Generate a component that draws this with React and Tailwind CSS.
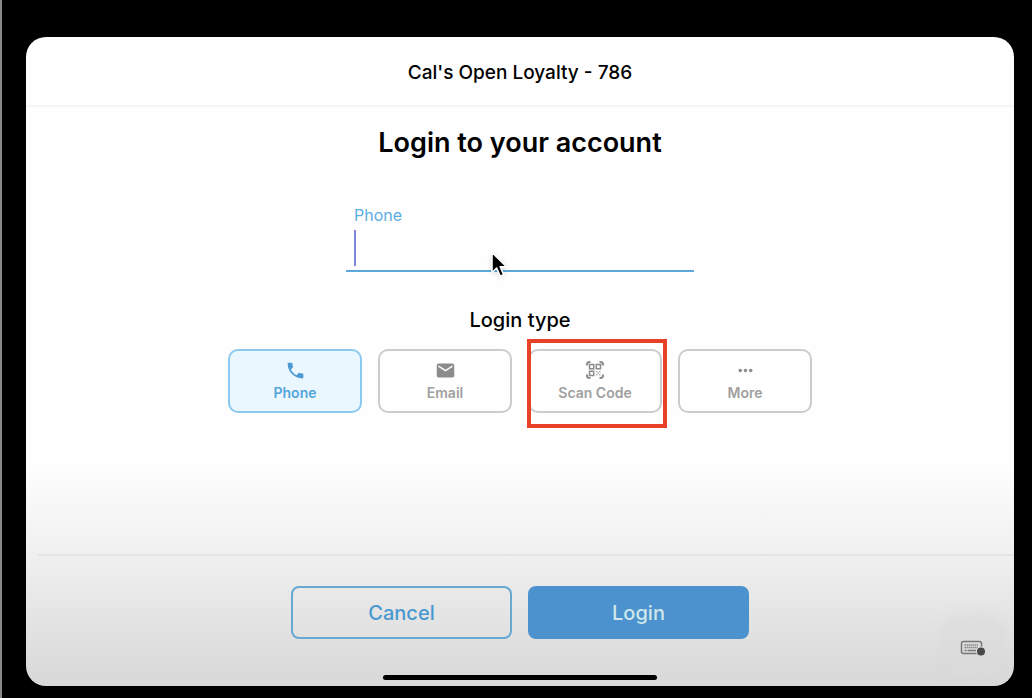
import React, { useState } from 'react';
import { MdPhone, MdEmail, MdMoreHoriz } from 'react-icons/md';
import clsx from 'clsx';

const ScanIcon = () => (
  <svg width="20" height="20" viewBox="0 0 20 20" fill="none" stroke="currentColor" strokeWidth={2} aria-hidden="true">
    {/* corners */}
    <path d="M2 5.5V4.5A2.5 2.5 0 0 1 4.5 2H5.5M14.5 2h1A2.5 2.5 0 0 1 18 4.5V5.5M18 14.5v1a2.5 2.5 0 0 1-2.5 2.5H14.5M5.5 18H4.5A2.5 2.5 0 0 1 2 15.5V14.5" />
    {/* code */}
    <path strokeWidth={1.5} d="M4.5 4.5h4.2v4.2H4.5zM11.3 4.5h4.2v4.2h-4.2zM4.5 11.3h4.2v4.2H4.5z" />
    <path
      fill="currentColor"
      stroke="none"
      opacity={0.6}
      d="M11 11h1.5v1.5H11zM14 11h1.5v1.5H14zM12.5 12.5H14V14h-1.5zM11 14h1.5v1.5H11zM14 14h1.5v1.5H14z"
    />
  </svg>
);

const KeyboardIcon = () => (
  <svg width="26" height="17" viewBox="0 0 26 17" fill="none" aria-hidden="true">
    <rect x="1.5" y="1.5" width="20" height="12" rx="2" stroke="#777" strokeWidth={1.5} />
    <path stroke="#888" strokeWidth={1.5} strokeDasharray="1.5 0.5" d="M4.5 5h14M4.5 7.5h14" />
    <path stroke="#777" strokeWidth={1.5} d="M4.5 10.5h2M7.5 10.5H16" />
    <circle cx="21" cy="11.5" r="5" fill="#dcdcdc" />
    <circle cx="21" cy="11.5" r="4" fill="#484848" />
  </svg>
);

const Pointer = () => (
  <svg
    className="absolute top-[22px] left-[144px] pointer-events-none drop-shadow-sm"
    width="20"
    height="28"
    viewBox="0 0 20 28"
    aria-hidden="true"
  >
    <path
      d="M2 1.5v20l4.7-4.4 3.4 8 3.5-1.5-3.4-7.8h6.3z"
      fill="#000"
      stroke="#fff"
      strokeWidth={1.5}
      strokeLinejoin="round"
    />
  </svg>
);

const loginTypes = [
  { id: 'phone', label: 'Phone', icon: <MdPhone size={21} /> },
  { id: 'email', label: 'Email', icon: <MdEmail size={21} /> },
  { id: 'scan', label: 'Scan Code', icon: <ScanIcon />, highlighted: true },
  { id: 'more', label: 'More', icon: <MdMoreHoriz size={21} /> },
];

const App = () => {
  const [type, setType] = useState('phone');
  const [phone, setPhone] = useState('');

  return (
    <div className="flex flex-col min-h-screen bg-black border-l-2 border-[#8a8a8a] pt-[37px] pr-[18px] pb-3 pl-6 font-['Inter',sans-serif] text-black">
      <main className="relative flex flex-col flex-1 rounded-[20px] overflow-hidden bg-[linear-gradient(to_bottom,#fefefe_66%,#efefef_80%,#d8d8d8_100%)]">
        <header className="flex items-center justify-center h-[70px] pt-1 border-b-2 border-[#f5f5f5]">
          <p className="text-[19px] leading-6 font-medium">Cal's Open Loyalty - 786</p>
        </header>

        <section className="flex flex-col items-center flex-1 px-6 pt-[18px]">
          <h1 className="text-[27px] leading-9 font-semibold">Login to your account</h1>

          {/* Phone field */}
          <div className="w-[348px] max-w-full mt-11 border-b-2 border-[#5ba9da]">
            <label htmlFor="phone" className="block px-2 text-base leading-5 text-[#5badde]">
              Phone
            </label>
            <div className="relative mt-1">
              <input
                id="phone"
                type="tel"
                value={phone}
                onChange={(e) => setPhone(e.target.value)}
                className="block w-full h-[41px] px-3 text-xl bg-transparent outline-none"
              />
              {phone === '' && <span className="absolute top-[1px] left-2 w-0.5 h-9 bg-[#8286d8]" />}
              <Pointer />
            </div>
          </div>

          <h2 className="mt-9 text-xl leading-6 font-medium">Login type</h2>

          {/* Login type buttons */}
          <div className="flex justify-center gap-4 mt-[17px]">
            {loginTypes.map((item) => (
              <div key={item.id} className="relative">
                <button
                  type="button"
                  onClick={() => setType(item.id)}
                  className={clsx(
                    'flex flex-col items-center justify-center w-[134px] h-16 pt-0.5 rounded-[10px] border-2 text-sm font-semibold cursor-pointer',
                    type === item.id
                      ? 'border-[#8bcaee] bg-[#eaf7fe] text-[#52a5dc]'
                      : 'border-[#cccccc] text-[#a0a0a0]'
                  )}
                >
                  <span className={clsx('flex items-center h-[22px]', type === item.id ? 'text-[#4c9ad4]' : 'text-[#8c8c8c]')}>
                    {item.icon}
                  </span>
                  <span className="leading-6">{item.label}</span>
                </button>
                {item.highlighted && (
                  <span className="absolute -top-2.5 -right-[5px] -bottom-[15px] -left-px border-4 border-[#e94128] pointer-events-none" />
                )}
              </div>
            ))}
          </div>
        </section>

        <footer className="flex flex-col items-center ml-3 pr-3 pb-1.5 border-t-2 border-[#e4e4e4]">
          <div className="flex justify-center gap-4 mt-[30px] text-xl font-medium">
            <button type="button" className="w-[221px] h-[53px] rounded-lg border-2 border-[#66a9d2] text-[#4a98d0] cursor-pointer">
              Cancel
            </button>
            <button type="button" className="w-[221px] h-[53px] rounded-lg bg-[#4b92ce] text-[#cfe7ea] cursor-pointer">
              Login
            </button>
          </div>
          <div className="w-[274px] h-[5px] mt-9 rounded-full bg-black" />
        </footer>

        <button
          type="button"
          aria-label="Keyboard"
          className="absolute right-3 bottom-2 flex items-center justify-center w-[58px] h-[60px] rounded-[20px] bg-[#dadada]/50 shadow-[0_0_10px_4px_#dadada80] cursor-pointer"
        >
          <KeyboardIcon />
        </button>
      </main>
    </div>
  );
};

export default App;
